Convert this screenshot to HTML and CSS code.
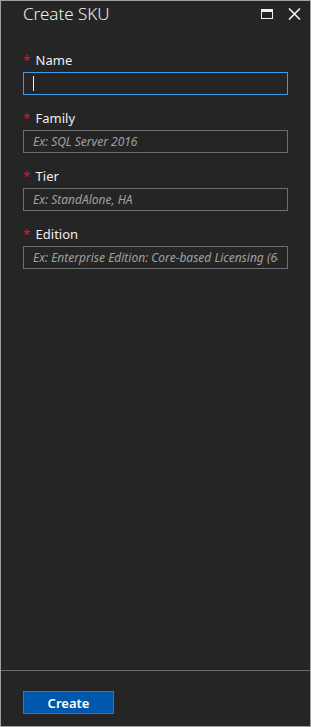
FILE: index.html
```html
<!DOCTYPE html>
<html lang="en">
<head>
  <meta charset="UTF-8" />
  <title>Create SKU</title>
  <link rel="stylesheet" href="styles.css">
</head>
<body>
  <div class="blade">
    <div class="header">
      <h1>Create SKU</h1>
      <div class="controls">
        <svg width="12" height="10" viewBox="0 0 12 10">
          <rect x="0.5" y="0.5" width="11" height="9" fill="none" stroke="#f0f0f0" stroke-width="1"/>
          <rect x="0" y="0" width="12" height="3" fill="#f0f0f0"/>
        </svg>
        <svg width="13" height="12" viewBox="0 0 13 12">
          <path d="M1 0.5 L12 11.5 M12 0.5 L1 11.5" stroke="#f0f0f0" stroke-width="1.6"/>
        </svg>
      </div>
    </div>

    <form class="content">
      <div class="field">
        <label><span class="req">*</span> Name</label>
        <div class="input-wrap">
          <input type="text" class="focused">
          <span class="caret"></span>
        </div>
      </div>
      <div class="field">
        <label><span class="req">*</span> Family</label>
        <input type="text" placeholder="Ex: SQL Server 2016">
      </div>
      <div class="field">
        <label><span class="req">*</span> Tier</label>
        <input type="text" placeholder="Ex: StandAlone, HA">
      </div>
      <div class="field">
        <label><span class="req">*</span> Edition</label>
        <input type="text" placeholder="Ex: Enterprise Edition: Core-based Licensing (64-bit)">
      </div>
    </form>

    <div class="footer">
      <button type="button">Create</button>
    </div>
  </div>
</body>
</html>
```

FILE: styles.css
```css
html, body {
  margin: 0;
  height: 100%;
  background: #252525;
}
body {
  font-family: "Noto Sans", "Open Sans", sans-serif;
  color: #f0f0f0;
}
.blade {
  box-sizing: border-box;
  height: 727px;
  border: 1px solid #a0a0a0;
  display: flex;
  flex-direction: column;
}
.header {
  display: flex;
  align-items: center;
  justify-content: space-between;
  padding: 0 9px 0 22px;
  height: 26px;
}
h1 {
  margin: 0;
  font-size: 17px;
  font-weight: 300;
  line-height: 26px;
  color: #f0f0f0;
}
.controls {
  display: flex;
  align-items: center;
  gap: 15px;
}
.content {
  flex: 1;
  padding: 25px 22px 0 22px;
}
.field {
  margin-bottom: 15px;
}
label {
  display: block;
  font-size: 13px;
  line-height: 16px;
  margin-bottom: 4px;
  color: #f0f0f0;
}
.req {
  color: #e81123;
  margin-right: 2px;
}
.input-wrap {
  position: relative;
  width: 265px;
}
.caret {
  position: absolute;
  left: 10px;
  top: 4px;
  width: 1px;
  height: 15px;
  background: #f0f0f0;
}
input {
  box-sizing: border-box;
  display: block;
  width: 265px;
  height: 23px;
  margin: 0;
  padding: 0 9px;
  background: #252525;
  border: 1px solid #6e6e6e;
  color: #f0f0f0;
  font-family: inherit;
  font-size: 12px;
  outline: none;
}
input::placeholder {
  color: #a0a0a0;
  font-style: italic;
}
input.focused {
  border-color: #3c9ae8;
}
.footer {
  border-top: 1px solid #6e6e6e;
  padding: 20px 22px 12px 22px;
}
button {
  width: 91px;
  height: 23px;
  background: #0058ad;
  border: 1px solid #6a6a6a;
  color: #ffffff;
  font-family: inherit;
  font-size: 13px;
  font-weight: 600;
  padding: 0;
}
```
